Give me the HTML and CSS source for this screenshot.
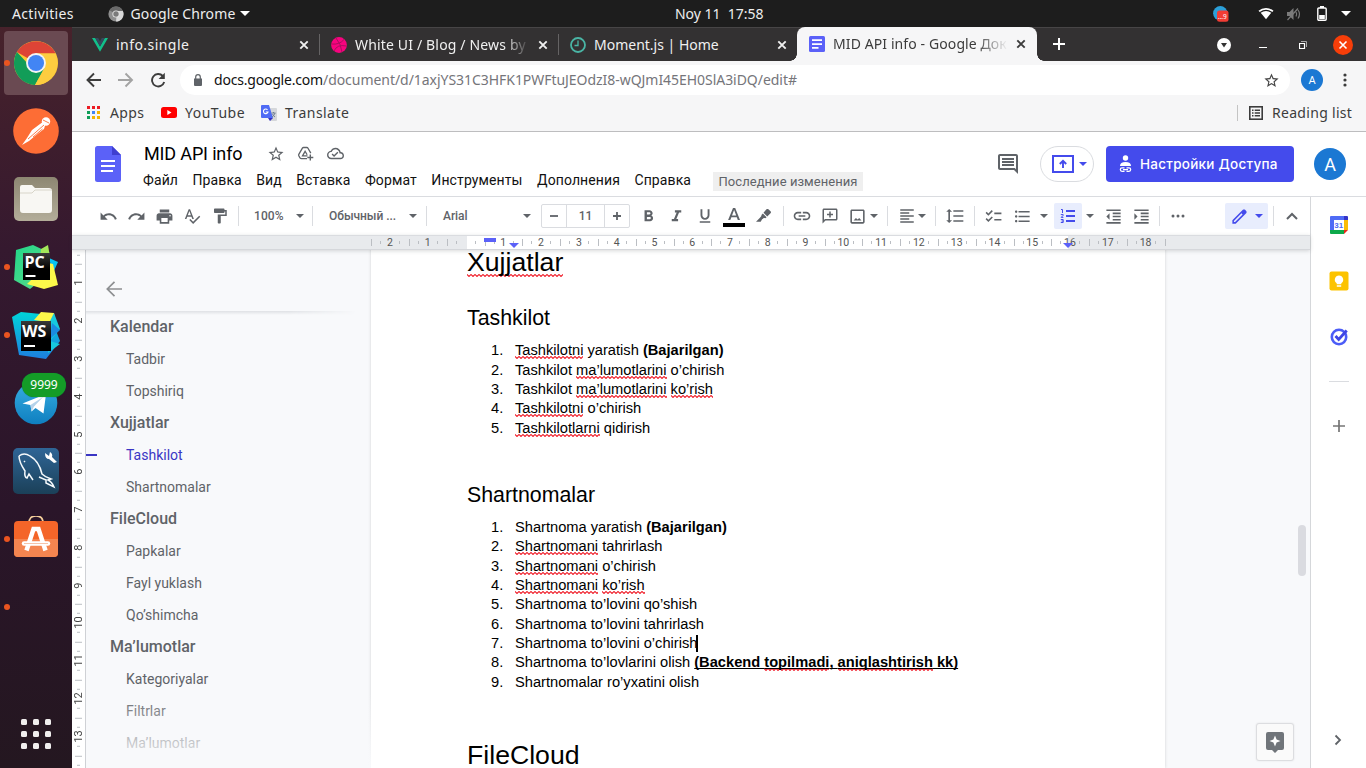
FILE: index.html
```html
<!DOCTYPE html>
<html lang="ru">
<head>
<meta charset="utf-8">
<title>MID API info - Google Документы</title>
<link rel="stylesheet" href="styles.css">
</head>
<body>
<svg width="0" height="0" class="defs">
  <defs>
    <symbol id="star" viewBox="0 0 24 24"><path d="M22 9.24l-7.19-.62L12 2 9.19 8.63 2 9.24l5.46 4.73L5.82 21 12 17.27 18.18 21l-1.63-7.03L22 9.24zM12 15.4l-3.76 2.27 1-4.28-3.32-2.88 4.38-.38L12 6.1l1.71 4.04 4.38.38-3.32 2.88 1 4.28L12 15.4z"/></symbol>
    <symbol id="caret" viewBox="0 0 8 4"><path d="M0 0h8L4 4z"/></symbol>
    <symbol id="cross" viewBox="0 0 10 10"><path d="M1.300 1.300l7.400 7.400M8.700 1.300l-7.400 7.400" stroke="currentColor" stroke-width="1.900" fill="none"/></symbol>
    <linearGradient id="gpc" x1="0" y1="0" x2="1" y2="1"><stop offset="0" stop-color="#21d789"/><stop offset="1" stop-color="#5fd98a"/></linearGradient>
    <linearGradient id="gws" x1="0" y1="0" x2="0" y2="1"><stop offset="0" stop-color="#00d4d9"/><stop offset="1" stop-color="#1d7fe0"/></linearGradient>
    <linearGradient id="gtg" x1="0" y1="0" x2="0" y2="1"><stop offset="0" stop-color="#37aee2"/><stop offset="1" stop-color="#0f7fc0"/></linearGradient>
    <linearGradient id="gsq" x1="0" y1="0" x2="0" y2="1"><stop offset="0" stop-color="#2f6596"/><stop offset="1" stop-color="#1b4058"/></linearGradient>
    <linearGradient id="gblk" x1="0" y1="0" x2="0" y2="1"><stop offset="0" stop-color="#3a3a3a"/><stop offset=".6" stop-color="#000"/></linearGradient>
    <linearGradient id="gfile" x1="0" y1="0" x2="0" y2="1"><stop offset="0" stop-color="#8d8772"/><stop offset="1" stop-color="#b3ad99"/></linearGradient>
  </defs>
</svg>

<header class="topbar">
  <span class="activities">Activities</span>
  <svg class="chrome-mini" viewBox="0 0 16 16" width="16" height="16"><circle cx="8" cy="8" r="7.6" fill="#8f8f8f"/><path d="M8 8L1.400 4.200A7.600 7.600 0 0 1 14.700 4.400z" fill="#6a6a6a"/><path d="M8 15.600A7.600 7.600 0 0 0 14.900 5H9z" fill="#d8d8d8"/><circle cx="8" cy="8" r="3.600" fill="#e6e6e6"/><circle cx="8" cy="8" r="2.700" fill="#7a7a7a"/></svg>
  <span class="app-name">Google Chrome</span>
  <svg class="tri" viewBox="0 0 8 4" width="10" height="5"><use href="#caret"/></svg>
  <span class="clock">Noy 11&nbsp; 17:58</span>
  <svg class="tray-tg" viewBox="0 0 16 16" width="16" height="16"><circle cx="7.300" cy="7.300" r="7.200" fill="#2b9fd8"/><rect x="4" y="4.500" width="11.500" height="11.200" rx="2.500" fill="#f23c34"/><text x="4.800" y="13" font-size="6.500" fill="#fff">...9</text></svg>
  <svg class="tray-wifi" viewBox="0 0 16 12" width="16" height="13"><path d="M.5 3.300A11.500 11.500 0 0 1 15.500 3.300L14.300 4.500Q8 0 1.700 4.500z"/><path d="M2.700 5.200Q8 1.600 13.300 5.200L8 11.800z"/></svg>
  <svg class="tray-vol" viewBox="0 0 16 14" width="16" height="14"><path d="M1 5h2.500l4-4v12l-4-4H1z"/><path d="M10 5q1.500 2 0 4.500M12 3q3 4 0 8.500M1.500 13L12 1.500" fill="none" stroke="#7b7b7b" stroke-width="1.200"/></svg>
  <svg class="tray-bat" viewBox="0 0 10 15" width="10" height="15"><path d="M3 0h4v2H3z"/><rect x=".8" y="2" width="8.400" height="12.200" rx="1" fill="none" stroke="#fff" stroke-width="1.400"/><path d="M2.200 9h5.600v4H2.200z"/></svg>
  <svg class="tri" viewBox="0 0 8 4" width="10" height="5"><use href="#caret"/></svg>
</header>

<div class="desktop">
<nav class="dock">
  <div class="dock-item"><i class="dot"></i><div class="tile">
    <svg viewBox="0 0 48 48" width="46" height="46"><circle cx="24" cy="24" r="23" fill="#fcc934"/><path d="M24 24L4.100 12.500A23 23 0 0 1 43.900 13L44 14H24z" fill="#dd4436"/><path d="M24 34L4.100 12.500A23 23 0 0 0 23 47L33 29z" fill="#129d58"/><path d="M24 14h20a23 23 0 0 1-21 33l10-18z" fill="#fdcd40"/><circle cx="24" cy="24" r="10.400" fill="#f4f4f4"/><circle cx="24" cy="24" r="8.400" fill="#4285f4"/></svg></div></div>
  <div class="dock-item"><svg viewBox="0 0 46 46" width="46" height="46"><circle cx="23" cy="23" r="22.800" fill="#fd6d35"/><circle cx="33" cy="13.500" r="4.200" fill="#fff"/><path d="M29 14.500L19 22l-5 8-5 7 7-4 6-5 9-7 1.500-5z" fill="#fff"/><path d="M31 17L15 31M29.500 21L20 29M30 12l6 3" stroke="#fd6d35" stroke-width=".9"/></svg></div>
  <div class="dock-item"><svg viewBox="0 0 46 46" width="46" height="46"><rect x="1" y="1" width="44" height="44" rx="5" fill="url(#gfile)"/><path d="M7 11q0-2 2-2h10l3 3h14q3 0 3 3v19q0 3-3 3H10q-3 0-3-3z" fill="#f8f7f3"/><path d="M7 17h12l3-3h17" stroke="#d8d5c9" fill="none"/></svg></div>
  <div class="dock-item"><i class="dot"></i><svg viewBox="0 0 46 46" width="46" height="46"><path d="M3 6L20 1l17 8 0 20-20 16L1 36z" fill="url(#gpc)"/><path d="M28 5l7-4 2 12-10 2z" fill="#a3e85a"/><path d="M36 14l9 4-5 11z" fill="#07c3f2"/><path d="M36 19l4 1 5 21-14 4-17-5z" fill="#fcf84a"/><rect x="10" y="9" width="27" height="27" fill="url(#gblk)"/><path d="M12.500 31h10v2h-10z" fill="#fff"/><text x="11.500" y="23.500" class="jb">PC</text></svg></div>
  <div class="dock-item"><i class="dot"></i><svg viewBox="0 0 48 48" width="48" height="48"><path d="M0 6l9-5 20 2 14 14 5 13-14 18-27-4z" fill="url(#gws)"/><path d="M22 9L29 1l13 1 1 10z" fill="#fcf84a"/><path d="M38 10l4-8 6 16-10 12 10 3-12 9z" fill="#16c9dd"/><path d="M40 12l8 7-10 9z" fill="#1b8be0"/><rect x="9" y="10" width="30" height="30" fill="url(#gblk)"/><path d="M12 34h11v2H12z" fill="#fff"/><text x="10" y="25.500" class="jb">WS</text></svg></div>
  <div class="dock-item"><svg viewBox="0 0 46 46" width="46" height="46"><circle cx="23" cy="23" r="21.300" fill="url(#gtg)"/><path d="M9.500 23.500L33 14l-2.500 19.500-8-5.500-4 3.500-1-6.500z" fill="#fff"/><path d="M17.500 25L30 17l-9 9.500-2.500 5z" fill="#b5d3ea"/></svg><span class="badge">9999</span></div>
  <div class="dock-item"><svg viewBox="0 0 46 46" width="46" height="46"><rect width="46" height="46" rx="5" fill="url(#gsq)"/><path d="M6 8q5-4 11 0 9 5 12 18 3 3 9 5l-3 1q4 2 6 7l-8-4v-3l-7-3M6 8q0 6 6 15-1 6 2 7l2-4 4 6M11 13l1 1" fill="none" stroke="#f4f8fb" stroke-width="1.500"/><path d="M32 5l4 3 1-4q3 2 2 5l5 5-3 1-5-4q-4 0-4-6z" fill="#fff"/></svg></div>
  <div class="dock-item"><i class="dot"></i><svg viewBox="0 0 46 46" width="46" height="46"><path d="M16 7q0-7 7-7t7 7" fill="none" stroke="#f4cf9b" stroke-width="1.700"/><rect x="1" y="5" width="44" height="36" rx="4" fill="#f46529"/><path d="M1 23h44v14q0 4-4 4H5q-4 0-4-4z" fill="#f48550"/><path d="M13.500 34.500l7-21.500h5l7 21.500" fill="none" stroke="#fff" stroke-width="4.500"/><path d="M11 27.500h24" stroke="#fff" stroke-width="4.500" stroke-linecap="round"/><path d="M11 27.500h24" stroke="#f6c3a8" stroke-width="1"/></svg></div>
  <div class="dock-item"><i class="dot"></i></div>
  <div class="apps-grid"><i></i><i></i><i></i><i></i><i></i><i></i><i></i><i></i><i></i></div>
</nav>

<div class="window">
  <div class="tabs">
    <div class="tab"><svg viewBox="0 0 16 16" width="16" height="16"><path d="M0 1h3.200L8 9.400 12.800 1H16L8 14.800z" fill="#12c08a"/><path d="M3.200 1h3L8 4.200 9.800 1h3L8 9.400z" fill="#35495e"/></svg><span class="tt t1">info.single</span><svg class="x" width="10" height="10"><use href="#cross"/></svg></div>
    <div class="tab"><svg viewBox="0 0 16 16" width="16" height="16"><circle cx="8" cy="8" r="7.900" fill="#f7037e"/><path d="M5 1q5 6 6 14M.5 7q8 1 12.500-4.500M3 14q3-7 12.500-5" fill="none" stroke="#a8105e" stroke-width="1"/></svg><span class="tt t2">White UI / Blog / News by</span><svg class="x" width="10" height="10"><use href="#cross"/></svg></div>
    <div class="tab nosep"><svg viewBox="0 0 16 16" width="16" height="16"><circle cx="8" cy="8" r="7" fill="none" stroke="#4ab5a5" stroke-width="1.800"/><path d="M8 3.500V8.500H4.500" fill="none" stroke="#4ab5a5" stroke-width="1.300"/></svg><span class="tt t3">Moment.js | Home</span><svg class="x" width="10" height="10"><use href="#cross"/></svg></div>
    <div class="tab active"><svg viewBox="0 0 16 16" width="16" height="16"><rect width="16" height="16" rx="1.500" fill="#5b61f8"/><path d="M3 3.300h10v1.700H3zM3 7.200h10v1.700H3zM3 11h6.500v1.700H3z" fill="#fff"/></svg><span class="tt t4">MID API info - Google Док</span><svg class="x" width="10" height="10"><use href="#cross"/></svg></div>
    <svg class="newtab" viewBox="0 0 12 12" width="12" height="12"><path d="M6 0v12M0 6h12" stroke="#fff" stroke-width="2"/></svg>
    <div class="winctl">
      <svg viewBox="0 0 14 14" width="14" height="14"><circle cx="7" cy="7" r="7" fill="#fff"/><path d="M4 5h6L7 9.500z" fill="#333"/></svg>
      <svg viewBox="0 0 8 8" width="8" height="8"><path d="M0 6.500h8" stroke="#fff" stroke-width="1"/></svg>
      <svg viewBox="0 0 8 8" width="8" height="8"><path d="M.5 2.500h5v5h-5z" fill="none" stroke="#fff" stroke-width="1.200"/><path d="M2 .5h5.500V6" fill="none" stroke="#aaa" stroke-width="1"/></svg>
      <svg viewBox="0 0 20 20" width="20" height="20"><circle cx="10" cy="10" r="10" fill="#f73e09"/><path d="M6.500 6.500l7 7M13.500 6.500l-7 7" stroke="#fff" stroke-width="1.600"/></svg>
    </div>
  </div>

  <div class="nav">
    <svg viewBox="0 0 16 16" width="16" height="16"><path d="M15 8H2M8 1.500L1.500 8 8 14.500" fill="none" stroke="#3c3c3c" stroke-width="1.900"/></svg>
    <svg viewBox="0 0 16 16" width="16" height="16"><path d="M0 8h14M7.500 1.500L14 8l-6.500 6.500" fill="none" stroke="#a3a3a3" stroke-width="1.900"/></svg>
    <svg viewBox="0 0 16 16" width="16" height="16"><path d="M12.800 4A6.200 6.200 0 1 0 14.200 10" fill="none" stroke="#3c3c3c" stroke-width="1.900"/><path d="M14.800 .8v6.200H8.600z" fill="#3c3c3c"/></svg>
    <div class="omnibox">
      <svg viewBox="0 0 8 12" width="8" height="12"><path d="M0 4.500h8V11q0 1-1 1H1q-1 0-1-1z" fill="#5f6368"/><path d="M1.700 5V3a2.300 2.300 0 0 1 4.600 0v2" fill="none" stroke="#5f6368" stroke-width="1.200"/></svg>
      <span class="url"><b>docs.google.com</b>/document/d/1axjYS31C3HFK1PWFtuJEOdzI8-wQJmI45EH0SlA3iDQ/edit#</span>
      <svg class="bm" width="17" height="17"><use href="#star"/></svg>
    </div>
    <span class="ava small">A</span>
    <svg class="kebab" viewBox="0 0 4 14" width="4" height="14"><circle cx="2" cy="2" r="1.600"/><circle cx="2" cy="7" r="1.600"/><circle cx="2" cy="12" r="1.600"/></svg>
  </div>

  <div class="bookmarks">
    <svg viewBox="0 0 13 13" width="13" height="13"><path d="M0 0h3v3H0zM5 0h3v3H5zM10 0h3v3h-3z" fill="#ec1c24"/><path d="M0 5h3v3H0zM0 10h3v3H0z" fill="#0f9d58"/><path d="M5 5h3v3H5z" fill="#4285f4"/><path d="M10 5h3v3h-3zM5 10h3v3H5zM10 10h3v3h-3z" fill="#f4b400"/></svg>
    <span class="bk b1">Apps</span>
    <svg viewBox="0 0 16 11" width="16" height="11"><rect width="16" height="11" rx="2.500" fill="#f00"/><path d="M6.300 3l4.200 2.500L6.300 8z" fill="#fff"/></svg>
    <span class="bk b2">YouTube</span>
    <svg viewBox="0 0 16 16" width="16" height="16"><path d="M6 3h9q1 0 1 1v11q0 1-1 1H9z" fill="#d5d7da"/><path d="M1 0h7l4 13H1q-1 0-1-1V1q0-1 1-1z" fill="#4f6bf5"/><path d="M7 13h5l-3 3z" fill="#3530c0"/><path d="M6.500 4.800a2.300 2.300 0 1 0 .5 2.200H4.700" fill="none" stroke="#fff" stroke-width="1.100"/><path d="M10.500 8h4M12.500 7v1M14 8q-1 3-3 4M11.500 9q1 2 2.500 3" stroke="#6a7a90" stroke-width=".9" fill="none"/></svg>
    <span class="bk b3">Translate</span>
    <span class="rl-sep"></span>
    <svg viewBox="0 0 14 14" width="14" height="14"><rect x=".8" y=".8" width="12.400" height="12.400" fill="none" stroke="#3c3c3c" stroke-width="1.600"/><path d="M3 4.200h1.500M3 7h1.500M3 9.800h1.500M5.700 4.200H11M5.700 7H11M5.700 9.800H11" stroke="#3c3c3c" stroke-width="1.400"/></svg>
    <span class="bk b4">Reading list</span>
  </div>

  <div class="dochead">
    <svg class="doclogo" viewBox="0 0 26 36" width="26" height="36"><path d="M2.500 0H17l9 9v24.500q0 2.500-2.500 2.500h-21Q0 36 0 33.500v-31Q0 0 2.500 0z" fill="#5b61f8"/><path d="M17 0l9 9h-9z" fill="#3f3fd0"/><path d="M6 14h14v2H6zM6 19h14v2H6zM6 24h12v2H6z" fill="#fff"/></svg>
    <div class="titles">
      <div class="trow"><span class="title">MID API info</span>
        <svg width="18" height="18"><use href="#star"/></svg>
        <svg viewBox="0 0 18 18" width="18" height="18"><g fill="none" stroke="#5f6368" stroke-width="1.300"><path d="M10 13.700H4.500Q3.500 13.700 3 12.900L1.800 10.800q-.4-.7 0-1.400L5.400 3.200Q5.800 2.500 6.600 2.500h3.200q.8 0 1.200.7l2.800 4.900"/><path d="M10.500 10.800H5.500L8.100 6.300l2 3.500"/></g><path d="M13.300 9.500v6M10.300 12.500h6" stroke="#5f6368" stroke-width="1.400"/></svg>
        <svg viewBox="0 0 24 24" width="17" height="17"><path d="M19.350 10.040C18.670 6.590 15.640 4 12 4 9.110 4 6.600 5.640 5.350 8.040 2.340 8.360 0 10.910 0 14c0 3.310 2.690 6 6 6h13c2.760 0 5-2.240 5-5 0-2.640-2.050-4.780-4.650-4.960zM19 18H6c-2.210 0-4-1.790-4-4 0-2.050 1.530-3.760 3.560-3.970l1.070-.11.500-.95C8.080 7.140 9.940 6 12 6c2.620 0 4.880 1.860 5.390 4.430l.3 1.500 1.530.11c1.560.1 2.780 1.410 2.780 2.960 0 1.650-1.350 3-3 3zm-9-3.820l-2.090-2.090L6.500 13.500 10 17l6.010-6.010-1.410-1.410z"/></svg>
      </div>
      <div class="menu"><span>Файл</span><span>Правка</span><span>Вид</span><span>Вставка</span><span>Формат</span><span>Инструменты</span><span>Дополнения</span><span>Справка</span><span class="last">Последние изменения</span></div>
    </div>
    <svg class="cmt" viewBox="0 0 24 24" width="24" height="24"><path d="M21.990 4c0-1.100-.89-2-1.990-2H4c-1.100 0-2 .9-2 2v12c0 1.100.9 2 2 2h14l4 4-.01-18zM20 4v13.170L18.830 16H4V4h16zM6 12h12v2H6zm0-3h12v2H6zm0-3h12v2H6z"/></svg>
    <div class="present"><svg viewBox="0 0 22 18" width="22" height="18"><path d="M1 1h20v16H1z" fill="none" stroke="#444bec" stroke-width="2"/><path d="M11 13V6M7.800 9L11 5.800 14.200 9" fill="none" stroke="#444bec" stroke-width="1.900"/></svg><svg class="c-blue" width="8" height="4"><use href="#caret"/></svg></div>
    <div class="share"><svg viewBox="0 0 13 18" width="13" height="18" fill="#fff"><circle cx="6.500" cy="3" r="2.700"/><path d="M1 11q0-4 5.500-4t5.500 4z"/><path d="M5.500 12.900H3a1.700 1.700 0 0 0 0 3.400h2.500M7.500 12.900H10a1.700 1.700 0 0 1 0 3.400H7.500M4 14.600h5" fill="none" stroke="#fff" stroke-width="1.200"/></svg><span>Настройки Доступа</span></div>
    <span class="ava">A</span>
  </div>

  <div class="work">
  <div class="editor">
    <div class="toolbar">
      <span class="ic"><svg viewBox="0 0 24 24" width="19" height="19"><path d="M12.500 8c-2.650 0-5.050.99-6.900 2.600L2 7v9h9l-3.620-3.620c1.390-1.160 3.160-1.880 5.120-1.880 3.540 0 6.550 2.310 7.600 5.500l2.370-.78C21.080 11.030 17.150 8 12.500 8z"/></svg></span>
      <span class="ic"><svg viewBox="0 0 24 24" width="19" height="19"><path d="M18.400 10.600C16.550 8.990 14.150 8 11.500 8c-4.650 0-8.580 3.030-9.960 7.220L3.900 16c1.050-3.190 4.050-5.500 7.600-5.500 1.950 0 3.730.72 5.120 1.880L13 16h9V7l-3.600 3.600z"/></svg></span>
      <span class="ic"><svg viewBox="0 0 24 24" width="19" height="19"><path d="M19 8H5c-1.660 0-3 1.340-3 3v6h4v4h12v-4h4v-6c0-1.660-1.340-3-3-3zm-3 11H8v-5h8v5zm3-7c-.55 0-1-.45-1-1s.45-1 1-1 1 .45 1 1-.45 1-1 1zm-1-9H6v4h12V3z"/></svg></span>
      <span class="ic"><svg viewBox="0 0 24 24" width="18" height="18"><path d="M12.450 16h2.090L9.430 3H7.570L2.460 16h2.090l1.120-3h5.640l1.140 3zm-6.020-5L8.500 5.480 10.570 11H6.430zm15.160.59l-8.090 8.090L9.830 16l-1.410 1.410 5.090 5.090L23 13l-1.410-1.410z"/></svg></span>
      <span class="ic"><svg viewBox="0 0 24 24" width="18" height="18"><path d="M18 4V3c0-.55-.45-1-1-1H5c-.55 0-1 .45-1 1v4c0 .55.45 1 1 1h12c.55 0 1-.45 1-1V6h1v4H9v11c0 .55.45 1 1 1h2c.55 0 1-.45 1-1v-9h8V4h-3z"/></svg></span>
      <i class="sep s4"></i>
      <span class="sel zoom">100%<svg width="8" height="4"><use href="#caret"/></svg></span>
      <i class="sep"></i>
      <span class="sel style">Обычный ...<svg width="8" height="4"><use href="#caret"/></svg></span>
      <i class="sep"></i>
      <span class="sel font">Arial<svg width="8" height="4"><use href="#caret"/></svg></span>
      <span class="size"><span class="mn"><svg viewBox="0 0 10 10" width="10" height="10"><path d="M1 5h8" stroke="#5f6368" stroke-width="1.800"/></svg></span><span class="num">11</span><span class="mn"><svg viewBox="0 0 10 10" width="10" height="10"><path d="M1 5h8M5 1v8" stroke="#5f6368" stroke-width="1.800"/></svg></span></span>
      <span class="ic s4"><svg viewBox="0 0 24 24" width="19" height="19"><path d="M15.600 10.790c.97-.67 1.650-1.770 1.650-2.790 0-2.260-1.750-4-4-4H7v14h7.040c2.090 0 3.710-1.700 3.710-3.790 0-1.520-.86-2.820-2.150-3.420zM10 6.500h3c.83 0 1.500.67 1.500 1.500s-.67 1.500-1.500 1.500h-3v-3zm3.500 9H10v-3h3.500c.83 0 1.500.67 1.500 1.500s-.67 1.500-1.500 1.500z"/></svg></span>
      <span class="ic w29"><svg viewBox="0 0 24 24" width="19" height="19"><path d="M10 4v3h2.210l-3.420 8H6v3h8v-3h-2.210l3.420-8H18V4z"/></svg></span>
      <span class="ic"><svg viewBox="0 0 24 24" width="18" height="18"><path d="M12 17c3.310 0 6-2.690 6-6V3h-2.500v8c0 1.930-1.570 3.500-3.500 3.500S8.500 12.930 8.500 11V3H6v8c0 3.310 2.690 6 6 6zm-7 2v2h14v-2H5z"/></svg></span>
      <span class="ic w29"><svg class="down1" viewBox="0 0 22 20" width="22" height="20"><path d="M10 1h2.200l4.800 12h-2.200l-1-2.700H8.400L7.300 13H5.100zm-1 7.600h4.200L11.100 3z"/><path d="M0 16h22v4H0z" fill="#000"/></svg></span>
      <span class="ic w31"><svg viewBox="0 0 16 16" width="15" height="15"><path d="M10 1.500l1.500-1.500q1-.5 2 .5l2 2q1 1 0 2L12 8 8 4zM7.300 4.800l4 4-1.300 1q-2-.4-3.500 1.200L5 13.500H0l4.200-4.300Q6 7.500 6 6z"/></svg></span>
      <i class="sep s4"></i>
      <span class="ic s4"><svg viewBox="0 0 24 24" width="20" height="20"><path d="M3.900 12c0-1.710 1.390-3.100 3.100-3.100h4V7H7c-2.760 0-5 2.240-5 5s2.240 5 5 5h4v-1.900H7c-1.710 0-3.100-1.390-3.100-3.100zM8 13h8v-2H8v2zm9-6h-4v1.900h4c1.710 0 3.100 1.390 3.100 3.100s-1.390 3.100-3.100 3.100h-4V17h4c2.760 0 5-2.240 5-5s-2.240-5-5-5z"/></svg></span>
      <span class="ic"><svg viewBox="0 0 24 24" width="18" height="18"><path d="M22 4c0-1.100-.9-2-2-2H4c-1.100 0-2 .9-2 2v18l4-4h14c1.100 0 2-.9 2-2V4zm-2 12H5.200L4 17.200V4h16v12zM11 14h2v-3h3V9h-3V6h-2v3H8v2h3z"/></svg></span>
      <span class="ic w26"><svg viewBox="0 0 24 24" width="19" height="19"><path d="M19 5v14H5V5h14m0-2H5c-1.100 0-2 .9-2 2v14c0 1.100.9 2 2 2h14c1.100 0 2-.9 2-2V5c0-1.100-.9-2-2-2zm-4.860 10.860l-2 2L10 14l-3 3h10z"/></svg></span>
      <svg width="8" height="4"><use href="#caret"/></svg>
      <i class="sep s9"></i>
      <span class="ic w20 s9"><svg viewBox="0 0 24 24" width="18" height="18"><path d="M15 15H3v2h12v-2zm0-8H3v2h12V7zM3 13h18v-2H3v2zm0 8h18v-2H3v2zM3 3v2h18V3H3z"/></svg></span>
      <svg class="s1" width="8" height="4"><use href="#caret"/></svg>
      <i class="sep s9"></i>
      <span class="ic w38"><svg viewBox="0 0 24 24" width="20" height="20"><path d="M6 7h2.500L5 3.500 1.500 7H4v10H1.500L5 20.500 8.500 17H6V7zm4-2v2h12V5H10zm0 14h12v-2H10v2zm0-6h12v-2H10v2z"/></svg></span>
      <i class="sep"></i>
      <span class="ic s4"><svg viewBox="0 0 24 24" width="19" height="19"><path d="M22 7h-9v2h9V7zm0 8h-9v2h9v-2zM5.540 11L2 7.460l1.410-1.410 2.120 2.120 4.240-4.240 1.410 1.410L5.540 11zm0 8L2 15.460l1.410-1.410 2.120 2.120 4.240-4.240 1.410 1.410L5.540 19z"/></svg></span>
      <span class="ic s1"><svg viewBox="0 0 24 24" width="19" height="19"><path d="M4 10.500c-.83 0-1.500.67-1.500 1.500s.67 1.500 1.500 1.500 1.500-.67 1.500-1.500-.67-1.500-1.500-1.500zm0-6c-.83 0-1.500.67-1.500 1.500S3.170 7.500 4 7.500 5.500 6.830 5.500 6 4.830 4.500 4 4.500zm0 12c-.83 0-1.500.68-1.500 1.500s.68 1.500 1.500 1.500 1.500-.68 1.500-1.500-.67-1.500-1.500-1.500zM7 19h14v-2H7v2zm0-6h14v-2H7v2zm0-8v2h14V5H7z"/></svg></span>
      <svg class="s4" width="8" height="4"><use href="#caret"/></svg>
      <span class="ic hot s6"><svg viewBox="0 0 16 16" width="16" height="16"><path d="M6 2h9v2H6zM6 7h9v2H6zM6 12h9v2H6z"/><path d="M1 1.500h1.500V5M.8 6.600h2.400v.7L1.200 9.400h2.200M.8 11.500h2.400v3H.8M1.500 13h1.700" fill="none" stroke="#444bec" stroke-width="1"/></svg></span>
      <svg class="s4" width="8" height="4"><use href="#caret"/></svg>
      <span class="ic s5"><svg viewBox="0 0 24 24" width="19" height="19"><path d="M11 17h10v-2H11v2zm-8-5l4 4V8l-4 4zm0 9h18v-2H3v2zM3 3v2h18V3H3zm8 6h10V7H11v2zm0 4h10v-2H11v2z"/></svg></span>
      <span class="ic"><svg viewBox="0 0 24 24" width="19" height="19"><path d="M3 21h18v-2H3v2zM3 8v8l4-4-4-4zm8 9h10v-2H11v2zM3 3v2h18V3H3zm8 6h10V7H11v2zm0 4h10v-2H11v2z"/></svg></span>
      <i class="sep s4"></i>
      <span class="ic w36"><svg viewBox="0 0 14 4" width="14" height="4"><circle cx="2" cy="2" r="1.500"/><circle cx="7" cy="2" r="1.500"/><circle cx="12" cy="2" r="1.500"/></svg></span>
      <span class="pen"><svg viewBox="0 0 24 24" width="19" height="19"><path d="M20.410 4.940l-1.350-1.350c-.78-.78-2.050-.78-2.830 0L3 16.820V21h4.180L20.410 7.770c.79-.78.79-2.050 0-2.830zm-14 14.120L5 19l-.06-1.410L14.500 8.040l1.410 1.410-9.500 9.610z"/></svg><svg width="8" height="4"><use href="#caret"/></svg></span>
      <i class="sep s5"></i>
      <span class="ic w36"><svg viewBox="0 0 12 8" width="12" height="8"><path d="M1 7l5-5 5 5" fill="none" stroke="#5f6368" stroke-width="2"/></svg></span>
    </div>

    <div class="ruler">
      <div class="rcells"><span>2</span><span>1</span><span></span><span>1</span><span>2</span><span>3</span><span>4</span><span>5</span><span>6</span><span>7</span><span>8</span><span>9</span><span>10</span><span>11</span><span>12</span><span>13</span><span>14</span><span>15</span><span>16</span><span>17</span><span>18</span><i></i></div>
      <i class="first-line"></i><i class="mark m-left"></i><i class="mark m-right"></i>
    </div>

    <div class="canvas">
      <div class="vruler"><span></span><span>1</span><span>2</span><span>3</span><span>4</span><span>5</span><span>6</span><span>7</span><span>8</span><span>9</span><span>10</span><span>11</span><span>12</span><span>13</span><span></span></div>
      <aside class="outline">
        <div class="back"><svg viewBox="0 0 16 16" width="16" height="16"><path d="M16 8H1.500M8.500 .8L1.300 8l7.200 7.200" fill="none" stroke="#8d8f91" stroke-width="1.700"/></svg></div>
        <ul>
          <li class="h">Kalendar</li><li>Tadbir</li><li>Topshiriq</li>
          <li class="h">Xujjatlar</li><li class="cur">Tashkilot</li><li>Shartnomalar</li>
          <li class="h">FileCloud</li><li>Papkalar</li><li>Fayl yuklash</li><li>Qo’shimcha</li>
          <li class="h">Ma’lumotlar</li><li>Kategoriyalar</li><li>Filtrlar</li><li>Ma’lumotlar</li>
        </ul>
      </aside>
      <article class="page">
        <h1><u>Xujjatlar</u></h1>
        <h2>Tashkilot</h2>
        <ol>
          <li><u>Tashkilotni</u> yaratish <b>(Bajarilgan)</b></li>
          <li>Tashkilot <u>ma’lumotlarini</u> o’chirish</li>
          <li>Tashkilot <u>ma’lumotlarini</u> <u>ko’rish</u></li>
          <li><u>Tashkilotni</u> o’chirish</li>
          <li><u>Tashkilotlarni</u> qidirish</li>
        </ol>
        <p></p>
        <h2>Shartnomalar</h2>
        <ol>
          <li>Shartnoma yaratish <b>(Bajarilgan)</b></li>
          <li><u>Shartnomani</u> tahrirlash</li>
          <li><u>Shartnomani</u> o’chirish</li>
          <li><u>Shartnomani</u> <u>ko’rish</u></li>
          <li>Shartnoma to’lovini qo’shish</li>
          <li>Shartnoma to’lovini tahrirlash</li>
          <li>Shartnoma to’lovini o’chirish<i class="cursor"></i></li>
          <li>Shartnoma to’lovlarini olish <b class="ul">(Backend <u>topilmadi</u>, <u>aniqlashtirish</u> kk)</b></li>
          <li>Shartnomalar ro’yxatini olish</li>
        </ol>
        <p></p>
        <h1>FileCloud</h1>
      </article>
      <i class="thumb"></i>
      <div class="explore"><svg viewBox="0 0 18 21" width="18" height="21"><path d="M2 0h14q2 0 2 2v14q0 2-2 2h-4l-3 3-3-3H2q-2 0-2-2V2Q0 0 2 0z" fill="#70757a"/><path d="M9 3.500l1.600 3.900L14.500 9l-3.900 1.600L9 14.500l-1.600-3.900L3.500 9l3.900-1.600z" fill="#fff"/></svg></div>
    </div>
  </div>

  <aside class="side">
    <svg viewBox="0 0 20 20" width="20" height="20"><path d="M2 1h14v4H5v10H1V2q0-1 1-1z" fill="#4f6bf5"/><path d="M15 1h3q1 0 1 1v3h-4z" fill="#3434c8"/><path d="M15 5h4v10h-4z" fill="#fbbc04"/><path d="M1 15h14v4H2q-1 0-1-1z" fill="#0da94a"/><path d="M15 15h4l-4 4z" fill="#ea2a1c"/><path d="M5 5h10v10H5z" fill="#fff"/><text x="5.300" y="13.200" class="cal">31</text></svg>
    <svg viewBox="0 0 20 20" width="20" height="20"><rect x=".5" y=".5" width="19" height="19" rx="2" fill="#fcc300"/><path d="M10 4.500a4.200 4.200 0 0 0-2.300 7.700v1h4.600v-1A4.200 4.200 0 0 0 10 4.500zM7.800 14.200h4.400v1.500H7.800z" fill="#fff"/></svg>
    <svg viewBox="0 0 20 20" width="20" height="20"><circle cx="10" cy="10" r="7.200" fill="none" stroke="#4b5cf7" stroke-width="2.600"/><path d="M6.500 9l3.200 3.500 8-9" fill="none" stroke="#3f45e4" stroke-width="2.800"/></svg>
    <i class="rule"></i>
    <svg class="plus" viewBox="0 0 12 12" width="12" height="12"><path d="M6 0v12M0 6h12" stroke="#757575" stroke-width="1.700"/></svg>
    <svg class="chev" viewBox="0 0 8 12" width="8" height="12"><path d="M1.500 1.500L6 6l-4.500 4.500" fill="none" stroke="#5f6368" stroke-width="1.800"/></svg>
  </aside>
  </div>
</div>
</div>
</body>
</html>
```
FILE: styles.css
```css
* { box-sizing: border-box; }
body { margin: 0; width: 1366px; height: 768px; overflow: hidden; display: flex; flex-direction: column; font-family: Roboto, "Liberation Sans", sans-serif; background: #fff; }
svg { display: block; flex: none; }
.defs { position: absolute; }

.topbar { height: 27px; flex: none; background: #1d1d1d; color: #eee; fill: #fff; display: flex; align-items: center; padding: 0 15px 0 12px; font: 14px "Noto Sans", sans-serif; white-space: pre; }
.activities { width: 97px; font-size: 14px; letter-spacing: 0.35px; }
.app-name { margin-left: 6px; width: 110px; letter-spacing: 0.12px; }
.clock { width: 541px; margin-left: 425px; letter-spacing: 0; }
.tray-wifi { margin-left: 29px; }
.tray-vol { margin-left: 12px; fill: #7b7b7b; }
.tray-bat { margin-left: 15px; }
.tray-bat + .tri { margin-left: 14px; }

.desktop { flex: 1; display: flex; min-height: 0; }
.dock { width: 72px; flex: none; padding-top: 2px; background: linear-gradient(#47222b, #35192f 30%, #2a1529 65%, #241720); display: flex; flex-direction: column; }
.dock-item { position: relative; height: 68px; flex: none; display: flex; align-items: center; justify-content: center; }
.tile { width: 64px; height: 64px; border-radius: 4px; background: #6a4a52; display: flex; align-items: center; justify-content: center; }
.dot { position: absolute; left: 4px; top: 31px; width: 6px; height: 6px; border-radius: 50%; background: #ea5420; }
.badge { position: absolute; left: 22px; top: 4px; width: 44px; height: 24px; border-radius: 12px; background: #149c27; color: #fff; font: 12px/24px "Noto Sans", sans-serif; text-align: center; box-shadow: 0 0 1px #063; }
.jb { font: bold 16px "Open Sans", sans-serif; fill: #fff; }
.apps-grid { margin: 77px auto 0 21px; display: grid; grid-template-columns: repeat(3, 6px); gap: 6px; padding-top: 1px; }
.apps-grid i { width: 6px; height: 6px; border-radius: 1.5px; background: #f0eeee; }

.window { flex: 1; min-width: 0; display: flex; flex-direction: column; }
.tabs { height: 34px; flex: none; background: #333132; border-top: 1px solid #474546; display: flex; padding-left: 8px; }
.tab { width: 239px; height: 33px; display: flex; align-items: center; padding: 0 10px 0 12px; position: relative; color: #f0f0f0; }
.tab::after { content: ""; position: absolute; right: -1px; top: 6px; width: 1px; height: 21px; background: #656364; }
.tab.nosep::after { display: none; }
.tt { flex: 1; margin: -1px 10px 0 8px; white-space: nowrap; overflow: hidden; font: 14px "Noto Sans", sans-serif; }
.t1 { letter-spacing: 0.45px; }
.t2 { letter-spacing: 0.16px; margin-right: 8px; -webkit-mask-image: linear-gradient(90deg, #000 85%, transparent); mask-image: linear-gradient(90deg, #000 85%, transparent); }
.t4 { letter-spacing: 0.1px; margin-right: 8px; -webkit-mask-image: linear-gradient(90deg, #000 82%, transparent); mask-image: linear-gradient(90deg, #000 82%, transparent); }
.tab.active { width: 240px; height: 34px; margin-top: -1px; padding-right: 11px; background: #f6f6f7; color: #3c3c3c; border-radius: 8px 8px 0 0; }
.tab.active::before, .tab.active::after { content: ""; position: absolute; top: auto; bottom: 0; width: 7px; height: 7px; background: radial-gradient(circle at 0 0, transparent 6.5px, #f6f6f7 7px); }
.tab.active::before { left: -7px; }
.tab.active::after { right: -7px; transform: scaleX(-1); }
.newtab { margin: 10px 0 0 16px; }
.winctl { margin: 0 13px 0 auto; display: flex; align-items: center; height: 33px; }
.winctl svg:nth-child(2) { margin-left: 28px; }
.winctl svg:nth-child(3) { margin-left: 32px; }
.winctl svg:nth-child(4) { margin-left: 26px; }

.nav { height: 38px; flex: none; background: #f6f6f7; display: flex; align-items: center; padding: 0 19px 0 14px; gap: 16px; }
.omnibox { width: 1110px; height: 30px; margin-left: -2px; border-radius: 15px; background: #fff; display: flex; align-items: center; padding: 0 10px 0 14px; }
.url { margin: -2px 0 0 12px; flex: 1; font: 14px "Noto Sans", sans-serif; color: #75757a; white-space: nowrap; letter-spacing: -0.045px; }
.url b { font-weight: 400; color: #111; letter-spacing: -0.2px; }
.bm { fill: #444; }
.ava { width: 32px; height: 32px; border-radius: 50%; background: #1b78d3; color: #fff; font-size: 18px; display: flex; align-items: center; justify-content: center; }
.ava.small { width: 22px; height: 22px; font-size: 11px; margin-left: -5px; }
.kebab { fill: #3c3c3c; margin-left: 4px; }

.bookmarks { height: 33px; flex: none; background: #f6f6f7; border-bottom: 1px solid #bdbdbf; display: flex; align-items: center; padding: 0 14px 5px 15px; }
.bk { font: 14px "Noto Sans", sans-serif; color: #3c3c3c; white-space: nowrap; letter-spacing: 0.4px; }
.b1 { margin-left: 10px; width: 51px; }
.b2 { margin-left: 8px; width: 76px; letter-spacing: 0.5px; }
.b3 { margin-left: 8px; letter-spacing: 0.45px; }
.b4 { margin-left: 9px; width: 80px; letter-spacing: 0.3px; }
.rl-sep { margin: 0 11px 0 auto; width: 1px; height: 16px; background: #c4c4c4; }

.dochead { height: 65px; flex: none; background: #fff; border-bottom: 1px solid #dadce0; display: flex; align-items: flex-start; }
.doclogo { margin: 14px 0 0 23px; }
.titles { margin-left: 23px; flex: 1; }
.trow { display: flex; align-items: center; height: 28px; margin-top: 8px; fill: #5f6368; }
.title { font-size: 18px; color: #000; width: 123px; margin-top: -1px; letter-spacing: -0.15px; }
.trow svg { margin-right: 12px; margin-top: -1px; }
.menu { display: flex; margin: 2px 0 0 -1px; font-size: 14px; line-height: 20px; color: #111; letter-spacing: 0.11px; gap: 14.45px; white-space: nowrap; }
.menu .last { margin: 2px 0 0 7.500px; width: 150px; height: 19px; line-height: 19px; background: #efefef; color: #5f6368; text-align: center; font-size: 13px; letter-spacing: 0.05px; }
.cmt { fill: #5f6368; margin: 20px 20px 0 0; }
.present { width: 54px; height: 36px; margin: 14px 12px 0 0; border: 1px solid #dadce0; border-radius: 18px; display: flex; align-items: center; padding-left: 11px; gap: 5px; }
.c-blue { fill: #444bec; }
.share { width: 188px; height: 36px; margin: 14px 20px 0 0; border-radius: 4px; background: #444bec; color: #fff; display: flex; align-items: center; padding-left: 13px; gap: 8px; font: 500 13.5px Inter, sans-serif; letter-spacing: 0.25px; white-space: nowrap; }
.dochead > .ava { margin: 16px 20px 0 0; }

.work { flex: 1; display: flex; min-height: 0; }
.editor { width: 1238px; display: flex; flex-direction: column; }
.toolbar { height: 38px; flex: none; display: flex; align-items: center; padding-left: 22px; fill: #5f6368; background: #fff; }
.ic { width: 28px; height: 26px; flex: none; display: flex; align-items: center; justify-content: center; }
.w20 { width: 20px; } .w26 { width: 26px; } .w29 { width: 29px; } .w31 { width: 31px; } .w36 { width: 36px; } .w38 { width: 38px; }
.s1 { margin-left: 1px; } .s4 { margin-left: 4px; } .s5 { margin-left: 5px; } .s6 { margin-left: 6px; } .s9 { margin-left: 9px; }
.down1 { margin-top: 2px; }
.sep { width: 1px; height: 20px; flex: none; background: #dadce0; }
.hot, .pen { background: #e8edfd; fill: #444bec; border-radius: 2px; }
.pen { margin-left: 29px; width: 43px; height: 26px; display: flex; align-items: center; padding-left: 5px; gap: 6px; }
.sel { flex: none; display: flex; align-items: center; justify-content: space-between; font-size: 12px; font-weight: 500; color: #5f6368; letter-spacing: 0.1px; }
.zoom { width: 73px; padding: 0 8px 0 15px; }
.style { width: 113px; padding: 0 9px 0 16px; letter-spacing: -0.05px; }
.font { width: 114px; padding: 0 10px 0 16px; letter-spacing: -0.05px; }
.size { width: 89px; height: 24px; flex: none; border: 1px solid #dadce0; border-radius: 2px; display: flex; font-size: 12px; font-weight: 500; color: #5f6368; }
.mn { width: 24px; display: flex; align-items: center; justify-content: center; }
.num { flex: 1; border: solid #dadce0; border-width: 0 1px; text-align: center; line-height: 22px; }

.ruler { height: 15px; flex: none; position: relative; background: linear-gradient(#fff, #fff) 395px 0 / 601px 13px no-repeat #e8eaed; border-top: 1px solid #dadce0; border-bottom: 1px solid #d5d7db; z-index: 2; box-shadow: 0 1px 4px rgba(60, 64, 67, .2); padding-left: 299.300px; }
.rcells { display: flex; }
.rcells span, .rcells i { width: 37.795px; height: 13px; flex: none; font-size: 10.5px; line-height: 13px; color: #555; text-align: center; text-indent: -0.5px;
  background: linear-gradient(#bbbec3, #bbbec3) 0 3px / 1px 7px no-repeat, linear-gradient(#bbbec3, #bbbec3) 9px 5px / 1px 3px no-repeat, linear-gradient(#bbbec3, #bbbec3) 28px 5px / 1px 3px no-repeat; }
.rcells i { width: 1px; }
.first-line { position: absolute; left: 412px; top: 2px; width: 12px; height: 4px; background: #5b61f8; }
.mark { position: absolute; top: 7px; border: 5.5px solid transparent; border-top-color: #5b61f8; border-bottom: 0; }
.m-left { left: 437px; } .m-right { left: 991px; }

.canvas { flex: 1; min-height: 0; display: flex; background: #f8f9fb; position: relative; overflow: hidden; }
.vruler { width: 14px; flex: none; background: #fff; border-right: 1px solid #cfd1d5; margin-top: -23.400px; }
.vruler span { display: flex; align-items: center; justify-content: center; height: 37.795px; writing-mode: vertical-rl; transform: rotate(180deg); font-size: 11px; color: #444; width: 13px;
  background: linear-gradient(#bbbec3, #bbbec3) 3px 100% / 7px 1px no-repeat, linear-gradient(#bbbec3, #bbbec3) 5px 9px / 3px 1px no-repeat, linear-gradient(#bbbec3, #bbbec3) 5px 28px / 3px 1px no-repeat; }
.outline { width: 285px; flex: none; position: relative; }
.outline::after { content: ""; position: absolute; left: 0; right: 0; bottom: 0; height: 76px; background: linear-gradient(rgba(248, 249, 251, 0), #f8f9fb); }
.back { height: 61px; padding: 31px 0 0 20px; position: relative; }
.back::after { content: ""; position: absolute; left: 0; bottom: -4px; width: 270px; height: 4px; background: linear-gradient(#dfe1e5, #f8f9fb); -webkit-mask-image: linear-gradient(90deg, #000 75%, transparent); mask-image: linear-gradient(90deg, #000 75%, transparent); }
.outline ul { list-style: none; margin: 0; padding: 0; }
.outline li { height: 32px; line-height: 32px; padding-left: 40px; font-size: 14px; color: #5f6368; position: relative; }
.outline li.h { font-size: 16px; font-weight: 500; padding-left: 24px; }
.outline li.cur { color: #3a36c4; }
.cur::before { content: ""; position: absolute; left: 0; top: 15px; width: 11px; height: 1.500px; background: #3a36c4; }
.page { width: 794px; flex: none; background: #fff; box-shadow: 0 0 3px rgba(60, 64, 67, .2); padding: 0 96px; font: 14.667px/19.390px "Liberation Sans", Arial, sans-serif; color: #000; margin-top: -4.900px; }
.page h1 { font-size: 26.667px; line-height: 35.250px; font-weight: 400; margin: 27.400px 0 8px; }
.page h1:first-child { margin-top: 0; }
.page h2 { font-size: 21.333px; line-height: 28.200px; font-weight: 400; margin: 24px 0 8px; }
.page p { height: 19.390px; margin: 0; }
.page ol { margin: 0 0 -0.750px; padding: 0.750px 0 0; list-style: none; counter-reset: n; }
.page li { counter-increment: n; height: 19.390px; padding-left: 48px; white-space: nowrap; }
.page li::before { content: counter(n) "."; display: inline-block; width: 24px; margin-left: -24px; }
.page u { text-decoration: none; padding-bottom: 1px; background: url("data:image/svg+xml,%3Csvg xmlns='http://www.w3.org/2000/svg' width='4' height='3'%3E%3Cpath d='M-1 .5l1 0 2 2 2-2 1 0' fill='none' stroke='%23f0202c' stroke-width='1.1'/%3E%3C/svg%3E") 0 100% repeat-x; }
.page h1 u { padding: 0; }
.ul { text-decoration: underline 1px; text-underline-offset: 1px; text-decoration-skip-ink: none; }
.cursor { display: inline-block; width: 2px; height: 17px; background: #000; margin: 0 0 0 -1px; vertical-align: -4px; }
.thumb { position: absolute; left: 1226px; top: 275px; width: 8px; height: 51px; border-radius: 4px; background: #dadbe0; }
.explore { position: absolute; left: 1184px; top: 473px; width: 38px; height: 38px; border: 1px solid #dcdde0; border-radius: 3px; background: #fafafa; box-shadow: 0 0 2px rgba(0, 0, 0, .1); display: flex; align-items: center; justify-content: center; }

.side { flex: 1; border-left: 1px solid #d5d7da; background: #fff; display: flex; flex-direction: column; align-items: center; padding-top: 18px; gap: 36px; }
.cal { font: bold 8px "Liberation Sans", sans-serif; fill: #4f6bf5; }
.rule { width: 20px; height: 1px; background: #dadce0; margin-top: -2px; }
.plus { margin-top: 2px; }
.chev { margin: auto 0 22px -2px; }
```
